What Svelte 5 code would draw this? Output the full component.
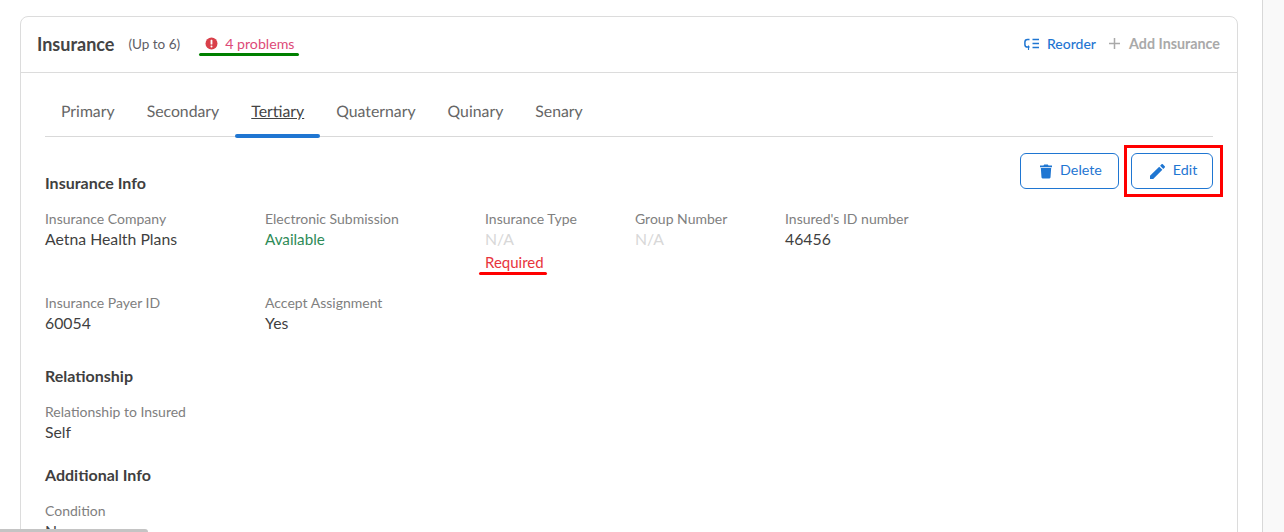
<script lang="ts">
  const tabs = ['Primary', 'Secondary', 'Tertiary', 'Quaternary', 'Quinary', 'Senary'];
  const active = 'Tertiary';
</script>

<div class="page">
  <main class="content">
    <section class="card">
      <header class="card-head">
        <h2>Insurance</h2>
        <span class="limit">(Up to 6)</span>
        <span class="problems">
          <svg width="13" height="13" viewBox="0 0 13 13"><circle cx="6.5" cy="6.5" r="6" fill="#d9404a"/><rect x="5.6" y="2.8" width="1.8" height="4.8" rx=".6" fill="#fff"/><circle cx="6.5" cy="9.4" r="1" fill="#fff"/></svg>
          <span>4 problems</span>
          <i class="mark-green"></i>
        </span>
        <div class="head-actions">
          <button class="link">
            <svg width="15" height="14" viewBox="0 0 15 14" fill="none" stroke="#1f76d2" stroke-width="1.500"><path d="M5.500 2.500H3.500a2.600 2.600 0 0 0-2.600 2.600v2.400a2.600 2.600 0 0 0 2.600 2.600h2"/><path d="M4.500 8.500v4.500" stroke-width="1.100"/><path d="M8.500 2.500H15M8.500 6.500H15M8.500 10.500H15"/></svg>
            Reorder
          </button>
          <button class="link off">
            <svg width="11" height="11" viewBox="0 0 11 11" stroke="#a9a9a9" stroke-width="1.500"><path d="M5.500 0v11M0 5.500h11"/></svg>
            Add Insurance
          </button>
        </div>
      </header>

      <div class="card-body">
        <nav class="tabs">
          {#each tabs as t}
            <span class="tab" class:active={t === active}>{t}</span>
          {/each}
        </nav>

        <div class="actions">
          <button class="btn">
            <svg width="12" height="15" viewBox="0 0 13 15" fill="#1f76d2"><path d="M4.500 0h4l.7 1H13v1.800H0V1h3.800zM.9 3.800h11.200l-.7 10a1.200 1.200 0 0 1-1.200 1.200H2.800a1.200 1.200 0 0 1-1.200-1.200z"/></svg>
            <span>Delete</span>
          </button>
          <span class="edit-wrap">
            <button class="btn edit">
              <svg width="15" height="15" viewBox="0 0 16 16" fill="#1f76d2"><path d="M0 16v-3.400L9.800 2.800l3.400 3.400L3.400 16zM10.800 1.800 12.300.3a1 1 0 0 1 1.400 0l2 2a1 1 0 0 1 0 1.400l-1.500 1.500z"/></svg>
              <span>Edit</span>
            </button>
            <i class="mark-box"></i>
          </span>
        </div>

        <h3 class="first">Insurance Info</h3>
        <div class="fields">
          <div class="field w220"><label>Insurance Company</label><p>Aetna Health Plans</p></div>
          <div class="field w220"><label>Electronic Submission</label><p class="ok">Available</p></div>
          <div class="field w150">
            <label>Insurance Type</label><p class="na">N/A</p>
            <span class="required">Required<i class="mark-red"></i></span>
          </div>
          <div class="field w150"><label>Group Number</label><p class="na">N/A</p></div>
          <div class="field"><label>Insured's ID number</label><p>46456</p></div>
        </div>
        <div class="fields second">
          <div class="field w220"><label>Insurance Payer ID</label><p>60054</p></div>
          <div class="field w220"><label>Accept Assignment</label><p>Yes</p></div>
        </div>

        <h3 class="rel">Relationship</h3>
        <div class="fields">
          <div class="field"><label>Relationship to Insured</label><p>Self</p></div>
        </div>

        <h3 class="add">Additional Info</h3>
        <div class="fields">
          <div class="field"><label>Condition</label><p>None</p></div>
        </div>
      </div>
    </section>
    <div class="hscroll"></div>
  </main>
  <aside class="rail"></aside>
</div>

<style>
  :global(body) {
    margin: 0;
    background: #fff;
  }
  .page {
    display: flex;
    height: 532px;
    overflow: hidden;
    font-family: Lato, "Open Sans", sans-serif;
    color: #3d3d3d;
  }
  .content {
    position: relative;
    flex: 1;
    padding: 16px 24px 0 20px;
    overflow: hidden;
    border-right: 1px solid #d8d8d8;
  }
  .rail {
    width: 21px;
    background: #f9f9f9;
  }
  .card {
    border: 1px solid #dcdcdc;
    border-radius: 8px;
  }
  .card-head {
    display: flex;
    align-items: center;
    height: 53px;
    padding: 0 17px 2px 16px;
    border-bottom: 1px solid #dcdcdc;
  }
  h2 {
    margin: 0;
    font-size: 18px;
    font-weight: 700;
    color: #444;
  }
  .limit {
    margin-left: 14px;
    font-size: 13.500px;
    color: #5d5d66;
  }
  .problems {
    position: relative;
    display: flex;
    align-items: center;
    gap: 7px;
    margin-left: 25px;
    font-size: 14.200px;
    color: #dd4a78;
  }
  .mark-green {
    position: absolute;
    left: -6px;
    right: -5px;
    bottom: -4px;
    height: 3px;
    border-radius: 2px;
    background: #008000;
  }
  .head-actions {
    display: flex;
    gap: 13px;
    margin-left: auto;
  }
  .link {
    display: flex;
    align-items: center;
    gap: 8px;
    padding: 0;
    border: 0;
    background: none;
    font: 500 14px Lato, sans-serif;
    color: #1f76d2;
  }
  .link.off {
    gap: 9px;
    font-size: 14.300px;
    font-weight: 700;
    color: #a9a9a9;
  }
  .card-body {
    position: relative;
    padding: 16px 24px 0;
  }
  .tabs {
    display: flex;
    height: 47px;
    border-bottom: 1px solid #d9d9d9;
    text-rendering: geometricPrecision;
  }
  .tab {
    display: flex;
    align-items: center;
    position: relative;
    height: 44px;
    padding: 0 16px;
    font-size: 15.800px;
    color: #666;
  }
  .tab.active {
    color: #444;
    text-decoration: underline;
  }
  .tab.active::after {
    content: '';
    position: absolute;
    left: 0;
    right: 0;
    bottom: -5px;
    height: 4px;
    border-radius: 2px;
    background: #1f76d2;
  }
  .actions {
    position: absolute;
    top: 80px;
    right: 24px;
    display: flex;
    gap: 12px;
  }
  .btn {
    display: flex;
    align-items: center;
    justify-content: center;
    gap: 8px;
    height: 36px;
    width: 99px;
    padding: 0 0 0 3px;
    border: 1px solid #1f76d2;
    border-radius: 6px;
    background: #fff;
    font: 14.300px Lato, sans-serif;
    color: #1f76d2;
  }
  .btn span {
    margin-bottom: 3px;
  }
  .btn.edit {
    width: 82px;
  }
  .edit-wrap {
    position: relative;
    display: flex;
  }
  .mark-box {
    position: absolute;
    inset: -8px -10px -8px -7px;
    border: 3px solid #f00;
  }
  h3 {
    margin: 0;
    font-size: 16px;
    line-height: 20px;
    font-weight: 700;
    color: #3f3f3f;
  }
  h3.first {
    margin-top: 36px;
  }
  h3.rel {
    margin-top: 33px;
  }
  h3.add {
    margin-top: 23px;
  }
  .fields {
    display: flex;
    margin-top: 17px;
  }
  .fields.second {
    margin-top: 0;
    padding-top: 22px;
  }
  .field {
    display: flex;
    flex-direction: column;
    align-items: flex-start;
  }
  .w220 {
    width: 220px;
  }
  .w150 {
    width: 150px;
  }
  label {
    font-size: 14px;
    line-height: 18px;
    color: #808080;
  }
  p {
    margin: 1px 0 0;
    font-size: 15.800px;
    line-height: 20px;
    color: #3f3f3f;
  }
  p.ok {
    font-size: 15.200px;
    line-height: 21px;
    color: #2e8b57;
  }
  p.na {
    color: #d8d8d8;
  }
  .required {
    position: relative;
    margin-top: 3px;
    font-size: 15px;
    line-height: 20px;
    color: #e8343c;
  }
  .mark-red {
    position: absolute;
    left: -6px;
    right: -3px;
    bottom: -3px;
    height: 3px;
    border-radius: 2px;
    background: #f00;
  }
  .hscroll {
    position: absolute;
    left: 0;
    bottom: 0;
    width: 148px;
    height: 3px;
    border-radius: 0 3px 0 0;
    background: #c4c4c4;
  }
</style>
